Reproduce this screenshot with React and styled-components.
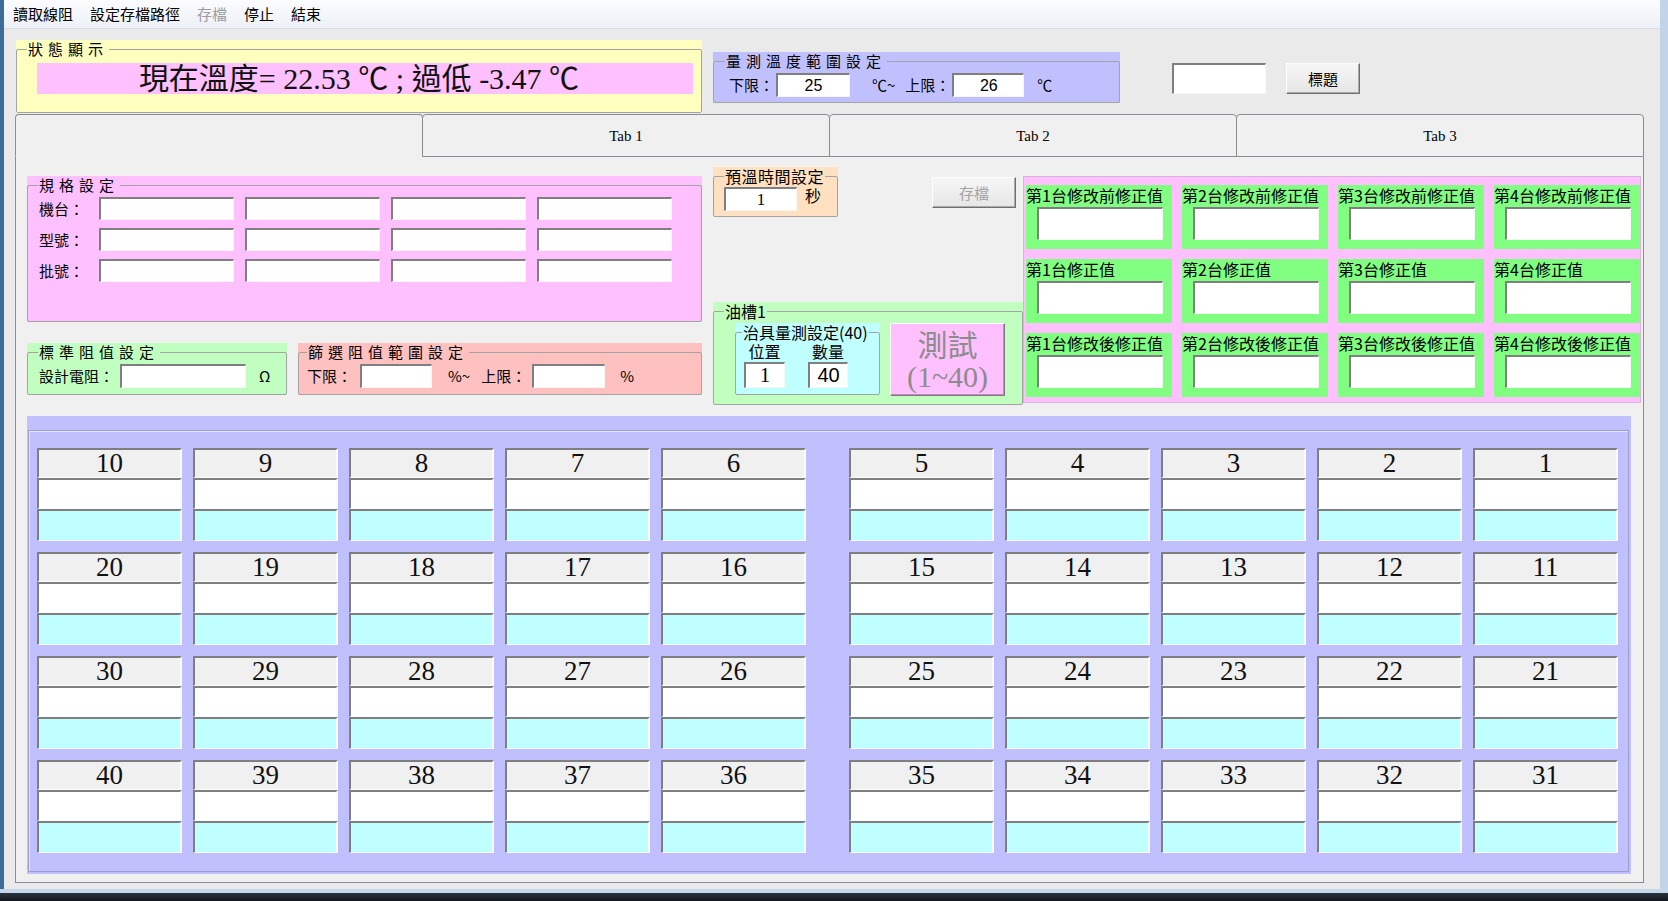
import React from 'react';
import styled, { createGlobalStyle } from 'styled-components';

const CJK = '"Noto Sans CJK TC", "Noto Sans", sans-serif';
const SERIF = '"Liberation Serif", "Noto Sans CJK TC", serif';
const SANS = '"Liberation Sans", "Noto Sans CJK TC", sans-serif';

const GlobalStyle = createGlobalStyle`
  html, body {
    margin: 0;
    padding: 0;
  }
  body {
    width: 1668px;
    height: 901px;
    overflow: hidden;
    background: #1d232b;
    font-family: ${CJK};
  }
  * {
    box-sizing: border-box;
  }
`;

const Window = styled.div`
  width: 1668px;
  height: 901px;
  display: flex;
  flex-direction: column;
`;

const Chrome = styled.div`
  flex: 1;
  min-height: 0;
  display: flex;
  flex-direction: column;
  border-left: 4px solid #3d6c98;
  border-right: 8px solid #c2d4e8;
`;

const TaskStrip = styled.div`
  flex: none;
  height: 12px;
  background: linear-gradient(#c4d7eb 0, #c4d7eb 4px, #2a343f 4px, #12171d 100%);
`;

const MenuBar = styled.div`
  flex: none;
  height: 29px;
  display: flex;
  align-items: center;
  padding-left: 0.5px;
  background: linear-gradient(#fbfcfe, #edf1f7);
  border-bottom: 1px solid #d9dfe8;
`;

const MenuItem = styled.span`
  padding: 0 8.5px;
  font-family: ${CJK};
  font-size: 15px;
  line-height: 18px;
  color: ${p => (p.$disabled ? '#9d9d9d' : '#000')};
`;

const Client = styled.div`
  flex: 1;
  display: flex;
  flex-direction: column;
  padding-left: 11px;
  background: #eaeaea;
`;

const TopRow = styled.div`
  flex: none;
  height: 85px;
  display: flex;
  align-items: flex-start;
`;

/* ---------- group boxes ---------- */

const GroupBox = styled.div`
  flex: none;
  width: ${p => p.$w}px;
  height: ${p => p.$h}px;
  background: ${p => p.$bg};
`;

const Frame = styled.fieldset`
  margin: 0;
  padding: 0;
  min-width: 0;
  height: 100%;
  border: 1px solid #a4a4a4;
  border-radius: 2px;
`;

const Legend = styled.legend`
  margin-left: ${p => p.$ml ?? 10}px;
  padding: 0 1px;
  font-family: ${CJK};
  font-size: ${p => p.$size ?? 15}px;
  line-height: 18px;
  letter-spacing: ${p => p.$spacing ?? 5}px;
  color: #000;
`;

const Label = styled.span`
  flex: none;
  margin-left: ${p => p.$ml ?? 0}px;
  font-family: ${CJK};
  font-size: ${p => p.$size ?? 15}px;
  line-height: ${p => p.$lh ?? 18}px;
  white-space: nowrap;
  color: #000;
`;

const Field = styled.input.attrs({ readOnly: true, type: 'text' })`
  flex: none;
  display: block;
  width: ${p => p.$w}px;
  height: ${p => p.$h ?? 24}px;
  margin: 0 0 0 ${p => p.$ml ?? 0}px;
  padding: 0;
  border-style: solid;
  border-width: 2px 1px 1px 2px;
  border-color: #7f7f7f #f6f6f6 #f6f6f6 #7f7f7f;
  background: #fff;
  font-family: ${p => (p.$serif ? SERIF : SANS)};
  font-size: ${p => p.$fs ?? 16}px;
  text-align: center;
  color: #000;
  outline: none;
`;

const Button = styled.button`
  flex: none;
  width: ${p => p.$w}px;
  height: ${p => p.$h}px;
  padding: 0;
  border: 1px solid;
  border-color: #fdfdfd #6f6f6f #6f6f6f #fdfdfd;
  box-shadow: inset -1px -1px 0 #a9a9a9;
  background: ${p => p.$bg ?? 'linear-gradient(#f6f6f6, #e6e6e6)'};
  font-family: ${CJK};
  font-size: 15px;
  color: ${p => p.$color ?? '#000'};
`;

/* ---------- top row ---------- */

const StatusGroup = styled(GroupBox)`
  margin: 11px 0 0 1px;
`;

const StatusBar = styled.div`
  width: 656px;
  height: 31px;
  margin: 5px 0 0 20px;
  padding-right: 12px;
  background: #ffc0ff;
  font-family: ${SERIF};
  font-size: 30px;
  line-height: 31px;
  text-align: center;
  white-space: pre;
  color: #111;
`;

const RangeGroup = styled(GroupBox)`
  margin: 23px 0 0 11px;
`;

const InlineRow = styled.div`
  display: flex;
  align-items: ${p => p.$align ?? 'center'};
  margin-top: ${p => p.$mt ?? 3}px;
  padding-left: ${p => p.$pl}px;
`;

const CaptionField = styled(Field)`
  margin: 34px 0 0 52px;
`;

const TitleButton = styled(Button)`
  margin: 34px 0 0 20px;
`;

/* ---------- tabs ---------- */

const TabControl = styled.div`
  flex: none;
  width: 1629px;
  height: 769px;
  display: flex;
  flex-direction: column;
`;

const TabStrip = styled.div`
  flex: none;
  height: 43px;
  display: flex;
`;

const Tab = styled.div`
  flex: 1;
  display: flex;
  align-items: center;
  justify-content: center;
  padding-top: 2px;
  border: 1px solid #8b8d92;
  border-bottom-color: ${p => (p.$active ? 'transparent' : '#8b8d92')};
  border-radius: 4px 4px 0 0;
  background: #f0f0f0;
  font-family: ${SERIF};
  font-size: 15px;
  color: #000;

  & + & {
    margin-left: -1px;
  }
`;

const TabPage = styled.div`
  flex: 1;
  display: flex;
  flex-direction: column;
  padding: 10px 2px 8px 11px;
  border: 1px solid #8b8d92;
  border-top: none;
  background: #f0f0f0;
`;

const Upper = styled.div`
  flex: none;
  height: 238px;
  display: flex;
`;

const ColumnA = styled.div`
  flex: none;
  width: 675px;
  padding-top: 9px;
`;

const SpecGrid = styled.div`
  display: grid;
  grid-template-columns: 49px repeat(4, 135px);
  grid-auto-rows: 23px;
  column-gap: 11px;
  row-gap: 8px;
  align-items: center;
  padding: 3px 0 0 11px;
`;

const ResistRow = styled.div`
  display: flex;
  gap: 11px;
  margin-top: 21px;
`;

const ColumnB = styled.div`
  flex: none;
  width: 310px;
  margin-left: 11px;
  display: flex;
  flex-direction: column;
  justify-content: space-between;
`;

const PreheatRow = styled.div`
  display: flex;
  align-items: flex-start;
`;

const SaveButton = styled(Button)`
  margin: 10px 0 0 94px;
`;

const TankRow = styled.div`
  display: flex;
  align-items: flex-start;
  margin-top: 3px;
  padding-left: 21px;
`;

const FixtureCols = styled.div`
  display: flex;
  gap: 23px;
  margin-top: 2px;
  padding-left: 8px;
`;

const FixtureCol = styled.div`
  display: flex;
  flex-direction: column;
  align-items: center;
  gap: 2px;
`;

const TestButton = styled(Button)`
  margin-left: 10px;
  display: flex;
  flex-direction: column;
  align-items: center;
  justify-content: center;
  border-color: #fff #7a7a7a #7a7a7a #fff;
  box-shadow: inset -1px -1px 0 #c58ac5;
`;

const TestLine = styled.span`
  font-family: ${p => (p.$serif ? SERIF : CJK)};
  font-size: 30px;
  line-height: 33px;
  color: #8c8c8c;
`;

/* ---------- correction panel ---------- */

const CorrectionPanel = styled.div`
  flex: none;
  width: 618px;
  height: 227px;
  margin-top: 9px;
  padding: 8px 0 0 2px;
  background: #ffc0ff;
  border: 1px solid #d8b4d8;
  display: grid;
  grid-template-columns: repeat(4, 146px);
  grid-auto-rows: 64px;
  column-gap: 10px;
  row-gap: 10px;
`;

const CorrectionCell = styled.div`
  background: #80ff80;
  padding-top: 1px;
`;

const CorrectionLabel = styled.div`
  font-family: ${CJK};
  font-size: 16px;
  line-height: 18px;
  white-space: nowrap;
  color: #000;
`;

const CorrectionField = styled(Field)`
  margin: 3px 0 0 11px;
`;

/* ---------- lane board ---------- */

const Board = styled.div`
  flex: none;
  width: 1604px;
  height: 458px;
  margin-top: 11px;
  padding: 14px 2px 2px 1px;
  background: #c0c0ff;
`;

const BoardInner = styled.div`
  height: 100%;
  display: flex;
  gap: 43px;
  padding: 17px 0 0 8px;
  border: 1px solid #9d9dc9;
  box-shadow: inset 1px 1px 0 #e4e4ff;
`;

const LaneGroup = styled.div`
  display: grid;
  grid-template-columns: repeat(5, 145px);
  grid-auto-rows: 93px;
  column-gap: 11px;
  row-gap: 11px;
`;

const Lane = styled.div`
  display: flex;
  flex-direction: column;
`;

const LaneSlot = styled.div`
  flex: none;
  height: ${p => p.$h}px;
  border-style: solid;
  border-width: 2px 2px 1px 2px;
  border-color: #7f7f7f #fbfbfb #fbfbfb #7f7f7f;
  background: ${p => p.$bg};
  font-family: ${SERIF};
  font-size: 27px;
  line-height: 27px;
  text-align: center;
  color: #111;
`;

const ROWS = [0, 1, 2, 3];
const leftLanes = ROWS.flatMap(r => [10, 9, 8, 7, 6].map(n => n + r * 10));
const rightLanes = ROWS.flatMap(r => [5, 4, 3, 2, 1].map(n => n + r * 10));

const correctionLabels = ['修改前修正值', '修正值', '修改後修正值'].flatMap(suffix =>
  [1, 2, 3, 4].map(i => `第${i}台${suffix}`)
);

const specRows = ['機台：', '型號：', '批號：'];

function LaneCell({ n }) {
  return (
    <Lane>
      <LaneSlot $h={30} $bg="#f0f0f0">{n}</LaneSlot>
      <LaneSlot $h={31} $bg="#ffffff" />
      <LaneSlot $h={32} $bg="#c0ffff" />
    </Lane>
  );
}

export default function App() {
  return (
    <Window>
      <GlobalStyle />
      <Chrome>
        <MenuBar>
          <MenuItem>讀取線阻</MenuItem>
          <MenuItem>設定存檔路徑</MenuItem>
          <MenuItem $disabled>存檔</MenuItem>
          <MenuItem>停止</MenuItem>
          <MenuItem>結束</MenuItem>
        </MenuBar>

        <Client>
          <TopRow>
            <StatusGroup $w={686} $h={73} $bg="#ffffc0">
              <Frame>
                <Legend>狀態顯示</Legend>
                <StatusBar>現在溫度= 22.53 ℃ ; 過低 -3.47 ℃</StatusBar>
              </Frame>
            </StatusGroup>

            <RangeGroup $w={407} $h={51} $bg="#c0c0ff">
              <Frame>
                <Legend $ml={11}>量測溫度範圍設定</Legend>
                <InlineRow $pl={15}>
                  <Label>下限：</Label>
                  <Field $w={74} $ml={2} defaultValue="25" />
                  <Label $ml={22}>℃~</Label>
                  <Label $ml={10}>上限：</Label>
                  <Field $w={72} $ml={2} defaultValue="26" />
                  <Label $ml={13}>℃</Label>
                </InlineRow>
              </Frame>
            </RangeGroup>

            <CaptionField $w={94} $h={31} />
            <TitleButton $w={74} $h={31}>標題</TitleButton>
          </TopRow>

          <TabControl>
            <TabStrip>
              <Tab $active />
              <Tab>Tab 1</Tab>
              <Tab>Tab 2</Tab>
              <Tab>Tab 3</Tab>
            </TabStrip>

            <TabPage>
              <Upper>
                <ColumnA>
                  <GroupBox $w={675} $h={146} $bg="#ffc0ff">
                    <Frame>
                      <Legend>規格設定</Legend>
                      <SpecGrid>
                        {specRows.map(label => (
                          <React.Fragment key={label}>
                            <Label>{label}</Label>
                            {[0, 1, 2, 3].map(i => (
                              <Field key={i} $w={135} $h={23} />
                            ))}
                          </React.Fragment>
                        ))}
                      </SpecGrid>
                    </Frame>
                  </GroupBox>

                  <ResistRow>
                    <GroupBox $w={260} $h={52} $bg="#c0ffc0">
                      <Frame>
                        <Legend>標準阻值設定</Legend>
                        <InlineRow $pl={11}>
                          <Label>設計電阻：</Label>
                          <Field $w={126} $ml={6} />
                          <Label $ml={13}>Ω</Label>
                        </InlineRow>
                      </Frame>
                    </GroupBox>

                    <GroupBox $w={404} $h={52} $bg="#ffc0c0">
                      <Frame>
                        <Legend $ml={8}>篩選阻值範圍設定</Legend>
                        <InlineRow $pl={8}>
                          <Label>下限：</Label>
                          <Field $w={72} $ml={8} />
                          <Label $ml={16}>%~</Label>
                          <Label $ml={11}>上限：</Label>
                          <Field $w={73} $ml={6} />
                          <Label $ml={15}>%</Label>
                        </InlineRow>
                      </Frame>
                    </GroupBox>
                  </ResistRow>
                </ColumnA>

                <ColumnB>
                  <PreheatRow>
                    <GroupBox $w={125} $h={50} $bg="#ffe0c0">
                      <Frame>
                        <Legend $size={16} $spacing={0.5}>預溫時間設定</Legend>
                        <InlineRow $pl={10} $mt={2} $align="flex-start">
                          <Field $w={73} $serif $fs={17} defaultValue="1" />
                          <Label $ml={8} $size={16} $lh={16}>秒</Label>
                        </InlineRow>
                      </Frame>
                    </GroupBox>
                    <SaveButton $w={84} $h={31} $color="#a3a3a3">存檔</SaveButton>
                  </PreheatRow>

                  <GroupBox $w={310} $h={103} $bg="#c0ffc0">
                    <Frame>
                      <Legend $size={16} $spacing={0}>油槽1</Legend>
                      <TankRow>
                        <GroupBox $w={145} $h={72} $bg="#c0ffff">
                          <Frame>
                            <Legend $ml={6} $size={16} $spacing={0}>治具量測設定(40)</Legend>
                            <FixtureCols>
                              <FixtureCol>
                                <Label $size={16} $lh={17}>位置</Label>
                                <Field $w={41} $h={26} $fs={21} $serif defaultValue="1" />
                              </FixtureCol>
                              <FixtureCol>
                                <Label $size={16} $lh={17}>數量</Label>
                                <Field $w={40} $h={26} $fs={20} defaultValue="40" />
                              </FixtureCol>
                            </FixtureCols>
                          </Frame>
                        </GroupBox>
                        <TestButton $w={115} $h={73} $bg="#ffc0ff">
                          <TestLine>測試</TestLine>
                          <TestLine $serif>(1~40)</TestLine>
                        </TestButton>
                      </TankRow>
                    </Frame>
                  </GroupBox>
                </ColumnB>

                <CorrectionPanel>
                  {correctionLabels.map(text => (
                    <CorrectionCell key={text}>
                      <CorrectionLabel>{text}</CorrectionLabel>
                      <CorrectionField $w={126} $h={33} />
                    </CorrectionCell>
                  ))}
                </CorrectionPanel>
              </Upper>

              <Board>
                <BoardInner>
                  <LaneGroup>
                    {leftLanes.map(n => (
                      <LaneCell key={n} n={n} />
                    ))}
                  </LaneGroup>
                  <LaneGroup>
                    {rightLanes.map(n => (
                      <LaneCell key={n} n={n} />
                    ))}
                  </LaneGroup>
                </BoardInner>
              </Board>
            </TabPage>
          </TabControl>
        </Client>
      </Chrome>
      <TaskStrip />
    </Window>
  );
}
